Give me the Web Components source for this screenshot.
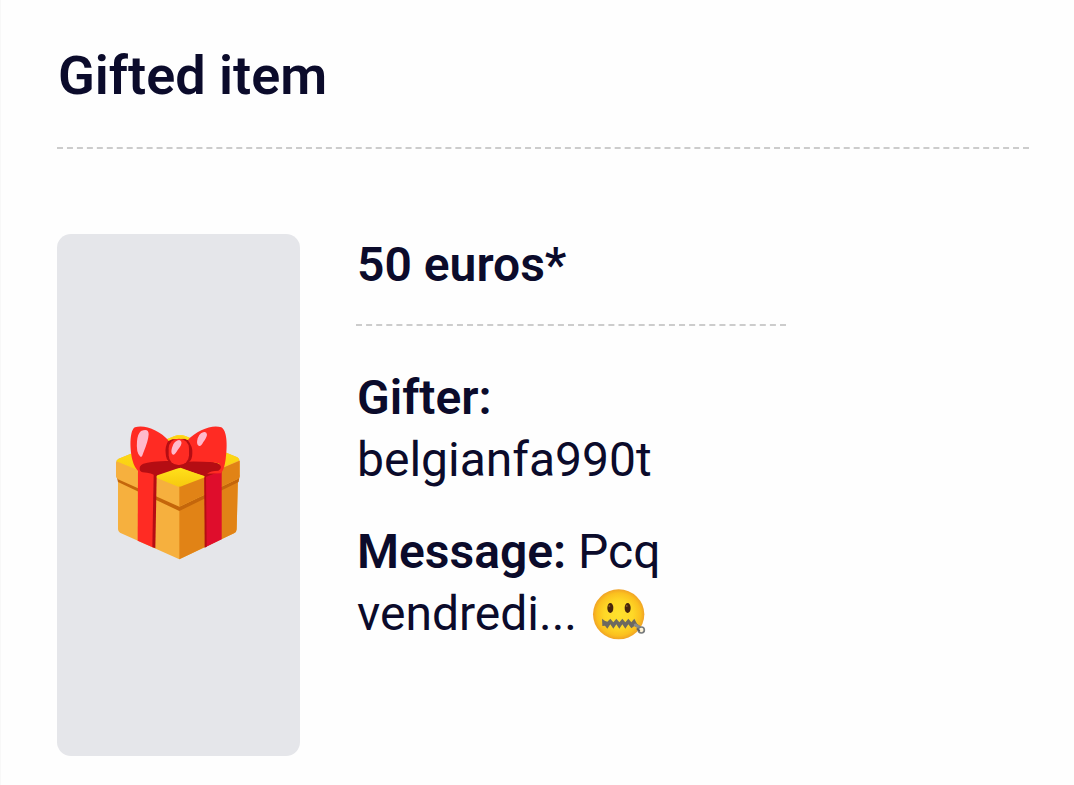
<!DOCTYPE html>
<html lang="en">
<head>
<meta charset="utf-8">
<meta name="viewport" content="width=device-width, initial-scale=1">
<title>Gifted item</title>
<style>
  body {
    margin: 0;
    background: #fefefe;
    color: #0b0b2b;
    font-family: Roboto, sans-serif;
    font-size: 48px;
    line-height: 62px;
  }
</style>
</head>
<body>
<gift-section heading="Gifted item">
  <gift-card>
    <gift-box-icon slot="picture"></gift-box-icon>
    <span slot="name">50 euros*</span>
    <gift-field label="Gifter:">belgianfa990t</gift-field>
    <gift-field label="Message:">Pcq vendredi... <zipper-face></zipper-face></gift-field>
  </gift-card>
</gift-section>

<script>
  class GiftSection extends HTMLElement {
    connectedCallback() {
      const root = this.attachShadow({ mode: 'open' });
      root.innerHTML = `
        <style>
          :host { display: block; box-sizing: border-box; min-height: 100vh; padding: 41px 45px 29px 56px; border-left: 1px solid #f8f8f8; }
          h1 { margin: 0; padding: 0 0 36px 1px; border-bottom: 2px dashed #ccc; font-size: 54px; line-height: 70px; font-weight: 600; }
          main { padding-top: 85px; }
        </style>
        <h1></h1>
        <main><slot></slot></main>`;
      root.querySelector('h1').textContent = this.getAttribute('heading');
    }
  }

  class GiftCard extends HTMLElement {
    connectedCallback() {
      this.attachShadow({ mode: 'open' }).innerHTML = `
        <style>
          :host { display: grid; grid-template-columns: 25% minmax(0, 1fr) 25%; min-height: 522px; }
          .picture { display: flex; align-items: center; justify-content: center; background: #e5e6ea; border-radius: 14px; }
          .details { margin-left: 56px; }
          h2 { margin: 0 0 41px; padding: 0 0 28px 1px; border-bottom: 2px dashed #ccc; font-size: 48px; line-height: 62px; font-weight: 600; }
          .fields { display: grid; gap: 30px; padding-left: 1px; }
        </style>
        <div class="picture"><slot name="picture"></slot></div>
        <div class="details">
          <h2><slot name="name"></slot></h2>
          <div class="fields"><slot></slot></div>
        </div>`;
    }
  }

  class GiftField extends HTMLElement {
    connectedCallback() {
      const root = this.attachShadow({ mode: 'open' });
      root.innerHTML = `
        <style>
          :host { display: block; }
          b { font-weight: 600; }
        </style>
        <b></b> <slot></slot>`;
      root.querySelector('b').textContent = this.getAttribute('label');
    }
  }

  class GiftBoxIcon extends HTMLElement {
    connectedCallback() {
      this.attachShadow({ mode: 'open' }).innerHTML = `
        <style>
          :host { display: block; }
          svg { display: block; width: 150px; height: 155px; }
        </style>
        <svg viewBox="-2 8 450 465" role="img" aria-label="Wrapped gift">
          <defs>
            <linearGradient id="top" x1="0" y1="0" x2="0" y2="1"><stop offset="0" stop-color="#ffe01a"/><stop offset="1" stop-color="#f7c90f"/></linearGradient>
          </defs>
          <path d="M40 184 L224 270 L400 182 L396 342 Q396 350 388 354 L224 432 L46 352 Q40 348 40 342Z" fill="#f6b03e"/>
          <path d="M224 270 L400 182 L396 342 Q396 350 388 354 L224 432Z" fill="#e18316"/>
          <path d="M35 180 L224 271 L405 180 L402 200 L224 287 L40 200Z" fill="#c4660b"/>
          <path d="M34 142 Q34 134 42 130 L210 62 Q226 56 242 62 L398 126 Q405 130 405 138 L405 182 Q405 188 399 191 L224 274 L40 192 Q34 188 34 182Z" fill="#f6b03e"/>
          <path d="M224 212 L405 136 L405 182 Q405 188 399 191 L224 274Z" fill="#e18316"/>
          <path d="M35 138 Q36 133 42 130 L210 62 Q226 56 242 62 L398 126 Q403 129 404 135 L230 211 Q224 214 216 211Z" fill="url(#top)"/>
          <path d="M100 150 L148 160 L147 397 L99 376Z" fill="#ff2b23"/>
          <path d="M147 172 L156 182 L152 399 L143 395Z" fill="#b50d13"/>
          <path d="M299 184 L310 168 L351 150 L351 372 L302 396Z" fill="#df0d2c"/>
          <path d="M299 182 L304 180 L306 394 L300 397Z" fill="#b50d13"/>
          <path d="M104 156 Q106 138 150 137 L300 137 Q352 139 352 160 Q352 171 340 172 Q326 174 303 185 L228 157 L155 184 Q142 172 114 171 Q104 169 104 156Z" fill="#b50d13"/>
          <path d="M191 75 C166 46 119 26 91 36 C76 43 74 92 83 133 Q89 158 104 170 Q101 151 116 145 Q135 138 197 136Z" fill="#ff2b23"/>
          <path d="M247 76 C279 43 324 26 350 36 C367 46 369 88 363 132 Q359 162 349 174 L307 175 Q318 166 341 166 Q355 158 344 145 Q325 138 248 139Z" fill="#ff2b23"/>
          <path d="M190 78 Q180 97 183 114 Q184 134 194 139 L204 145 L240 145 L253 140 Q263 133 263 114 Q265 94 249 74 L240 70 L202 72Z" fill="#b50d13"/>
          <path d="M191 75 Q222 48 253 74 Q222 62 191 75Z" fill="#fdd116"/>
          <rect x="192" y="70" width="61" height="79" rx="29" fill="#ff2b23"/>
          <path d="M158 180 L216 160 Q223 157 231 160 L297 181 Q303 184 297 187 L234 211 Q224 216 214 211 L159 189 Q153 184 158 180Z" fill="url(#top)"/>
          <g fill="#ffb9cb">
            <path d="M109 47 Q132 37 132 57 Q131 77 116 112 Q111 129 106 123 Q94 112 97 78 Q99 55 109 47Z"/>
            <path d="M211 80 Q225 68 230 79 Q233 87 219 104 Q209 122 203 117 Q198 111 202 97 Q205 85 211 80Z"/>
            <path d="M289 54 Q306 44 307 58 Q306 66 296 80 Q288 96 282 91 Q274 88 279 69 Q282 59 289 54Z"/>
          </g>
        </svg>`;
    }
  }

  class ZipperFace extends HTMLElement {
    connectedCallback() {
      this.attachShadow({ mode: 'open' }).innerHTML = `
        <style>
          :host { display: inline-block; width: 57px; height: 57px; vertical-align: -12px; }
          svg { display: block; width: 100%; height: 100%; }
        </style>
        <svg viewBox="12 14 171 171" role="img" aria-label="Zipper-mouth face">
          <defs>
            <radialGradient id="skin"><stop offset="0" stop-color="#ffe12d"/><stop offset=".55" stop-color="#fed827"/><stop offset=".85" stop-color="#fbc01f"/><stop offset="1" stop-color="#f0a326"/></radialGradient>
          </defs>
          <ellipse cx="101" cy="102" rx="77" ry="75" fill="url(#skin)"/>
          <ellipse cx="76" cy="83" rx="9" ry="15" fill="#47250c"/>
          <ellipse cx="128" cy="83" rx="9" ry="15" fill="#47250c"/>
          <circle cx="73" cy="77" r="3" fill="#8a5a20"/>
          <circle cx="125" cy="77" r="3" fill="#8a5a20"/>
          <path d="M51 115 L59 121 L67 124 L76 115 L85 126 L94 115 L103 126 L112 115 L121 126 L130 115 L139 126 L148 115 L156 130 L165 137 L160 144 L148 137 L139 144 L130 132 L121 145 L112 132 L103 145 L94 132 L85 145 L76 132 L67 145 L60 136 L52 137Z" fill="#6d6960"/>
          <path d="M151 134 L162 140" stroke="#8b8d8c" stroke-width="9" stroke-linecap="round"/>
          <circle cx="169" cy="149" r="9" fill="#fff4d8" stroke="#777b7d" stroke-width="5"/>
          <path d="M157 146 L163 151" stroke="#5f6264" stroke-width="5" stroke-linecap="round"/>
        </svg>`;
    }
  }

  customElements.define('gift-section', GiftSection);
  customElements.define('gift-card', GiftCard);
  customElements.define('gift-field', GiftField);
  customElements.define('gift-box-icon', GiftBoxIcon);
  customElements.define('zipper-face', ZipperFace);
</script>
</body>
</html>
